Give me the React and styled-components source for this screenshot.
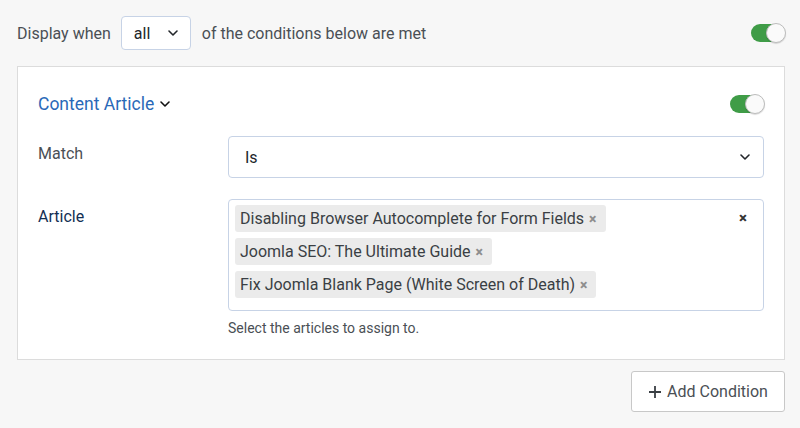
import React from "react";
import styled, { createGlobalStyle } from "styled-components";

const Global = createGlobalStyle`
  html, body { margin: 0; padding: 0; background: #f7f7f7; }
  body { font-family: Roboto, "Noto Sans", sans-serif; color: #495057; -webkit-font-smoothing: antialiased; }
  * { box-sizing: border-box; }
`;

const Page = styled.div`
  width: 800px;
  height: 428px;
  padding: 16px 15px 0 17px;
  display: flex;
  flex-direction: column;
`;

const TopRow = styled.div`
  display: flex;
  align-items: center;
  height: 34px;
  font-size: 16px;
  color: #4a4f55;
`;

const SmallSelect = styled.div`
  width: 70px;
  height: 34px;
  margin: 0 11px 0 10px;
  border: 1px solid #c7d3e6;
  border-radius: 4px;
  background: #fff;
  display: flex;
  align-items: center;
  justify-content: space-between;
  padding: 0 11px 0 12px;
  color: #22262a;
  font-size: 16px;
`;

const Spacer = styled.div`
  flex: 1;
`;

const ToggleTrack = styled.div`
  width: 34px;
  height: 18px;
  border-radius: 9px;
  background: #3f9c47;
  position: relative;
  flex-shrink: 0;
`;

const ToggleKnob = styled.div`
  position: absolute;
  top: -1px;
  right: -1px;
  width: 20px;
  height: 20px;
  border-radius: 50%;
  background: #fafafa;
  border: 1px solid #bdbdbd;
  box-shadow: 0 1px 1px rgba(0,0,0,0.15);
`;

const Toggle = () => (
  <ToggleTrack>
    <ToggleKnob />
  </ToggleTrack>
);

const Card = styled.div`
  margin-top: 16px;
  background: #fff;
  border: 1px solid #dcdcdc;
  height: 294px;
  padding: 26px 20px 0 20px;
  display: flex;
  flex-direction: column;
`;

const CardHeader = styled.div`
  display: flex;
  align-items: center;
  height: 22px;
`;

const Title = styled.div`
  color: #2a69b8;
  font-size: 17.5px;
  display: flex;
  align-items: center;
  gap: 5px;
`;

const FieldRow = styled.div`
  display: flex;
  margin-top: ${(p) => p.$mt}px;
`;

const Label = styled.div`
  width: 190px;
  flex-shrink: 0;
  font-size: 16px;
  color: ${(p) => (p.$required ? "#132f53" : "#4a4f55")};
  padding-top: ${(p) => p.$pt}px;
`;

const Control = styled.div`
  flex: 1;
  display: flex;
  flex-direction: column;
`;

const Select = styled.div`
  height: 42px;
  border: 1px solid #c7d3e6;
  border-radius: 4px;
  background: #fff;
  display: flex;
  align-items: center;
  justify-content: space-between;
  padding: 0 12px 0 16px;
  font-size: 16px;
  color: #22262a;
`;

const Multi = styled.div`
  height: 112px;
  border: 1px solid #c7d3e6;
  border-radius: 4px;
  background: #fff;
  padding: 5px 16px 0 6px;
  display: flex;
  align-items: flex-start;
`;

const Tags = styled.div`
  flex: 1;
  display: flex;
  flex-direction: column;
  align-items: flex-start;
  gap: 6px;
`;

const Tag = styled.div`
  height: 27px;
  background: #ebebeb;
  border-radius: 3px;
  padding: 0 9px 0 5px;
  display: flex;
  align-items: center;
  gap: 5px;
  font-size: 16px;
  color: #3a3f44;
`;

const TagX = styled.span`
  color: #8e8e8e;
  font-size: 14px;
  font-weight: 900;
`;

const ClearX = styled.span`
  color: #333;
  font-size: 15px;
  font-weight: 900;
  margin-top: 4px;
`;

const Help = styled.div`
  margin-top: 9px;
  font-size: 14px;
  color: #4a4f55;
`;

const Footer = styled.div`
  display: flex;
  justify-content: flex-end;
  margin-top: 11px;
`;

const Button = styled.button`
  width: 154px;
  height: 41px;
  background: #fff;
  border: 1px solid #c8c8c8;
  border-radius: 3px;
  font-family: Roboto, sans-serif;
  font-size: 16px;
  color: #4a4f55;
  display: flex;
  align-items: center;
  justify-content: center;
  gap: 5px;
  padding: 0;
`;

const Chevron = ({ size = 12, color = "#22262a" }) => (
  <svg width={size} height={size} viewBox="0 0 12 12">
    <path d="M2 4 L6 8 L10 4" fill="none" stroke={color} strokeWidth="1.6" strokeLinecap="round" strokeLinejoin="round" />
  </svg>
);

const Plus = () => (
  <svg width="14" height="14" viewBox="0 0 14 14">
    <path d="M7 1 V13 M1 7 H13" stroke="#3a3f44" strokeWidth="1.8" />
  </svg>
);

export default function App() {
  const tags = [
    "Disabling Browser Autocomplete for Form Fields",
    "Joomla SEO: The Ultimate Guide",
    "Fix Joomla Blank Page (White Screen of Death)",
  ];
  return (
    <>
      <Global />
      <Page>
        <TopRow>
          Display when
          <SmallSelect>
            all
            <Chevron />
          </SmallSelect>
          of the conditions below are met
          <Spacer />
          <Toggle />
        </TopRow>
        <Card>
          <CardHeader>
            <Title>
              Content Article
              <Chevron size={12} color="#111" />
            </Title>
            <Spacer />
            <Toggle />
          </CardHeader>
          <FieldRow $mt={21}>
            <Label $pt={8}>Match</Label>
            <Control>
              <Select>
                Is
                <Chevron />
              </Select>
            </Control>
          </FieldRow>
          <FieldRow $mt={21}>
            <Label $pt={8} $required>Article</Label>
            <Control>
              <Multi>
                <Tags>
                  {tags.map((t) => (
                    <Tag key={t}>
                      {t}
                      <TagX>×</TagX>
                    </Tag>
                  ))}
                </Tags>
                <ClearX>×</ClearX>
              </Multi>
              <Help>Select the articles to assign to.</Help>
            </Control>
          </FieldRow>
        </Card>
        <Footer>
          <Button>
            <Plus />
            Add Condition
          </Button>
        </Footer>
      </Page>
    </>
  );
}
